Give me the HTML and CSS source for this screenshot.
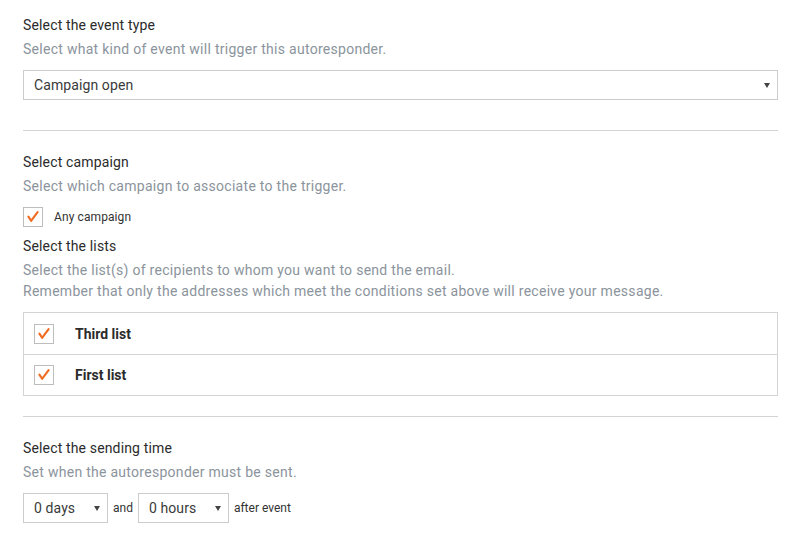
FILE: index.html
```html
<!DOCTYPE html>
<html lang="en">

<head>
  <meta charset="UTF-8" />
  <meta name="viewport" content="width=device-width, initial-scale=1.0" />
  <title>Autoresponder trigger</title>
  <link rel="stylesheet" href="styles.css">
</head>

<body>
  <form class="trigger-form">
    <section class="field">
      <h3 class="field-title">Select the event type</h3>
      <p class="field-help">Select what kind of event will trigger this autoresponder.</p>
      <div class="select-wrap select-wide">
        <select class="select">
          <option>Campaign open</option>
        </select>
      </div>
    </section>

    <hr class="divider divider-first" />

    <section class="field">
      <h3 class="field-title">Select campaign</h3>
      <p class="field-help">Select which campaign to associate to the trigger.</p>
      <label class="check-row">
        <span class="checkbox">
          <svg viewBox="0 0 20 20" width="20" height="20"><path d="M5.4 9.6 L8.1 13.8 L14.6 5.2" /></svg>
        </span>
        <span class="check-label">Any campaign</span>
      </label>

      <h3 class="field-title">Select the lists</h3>
      <p class="field-help">Select the list(s) of recipients to whom you want to send the email.<br>Remember that only the addresses which meet the conditions set above will receive your message.</p>
      <ul class="list-box">
        <li class="list-item">
          <span class="checkbox">
            <svg viewBox="0 0 20 20" width="20" height="20"><path d="M5.4 9.6 L8.1 13.8 L14.6 5.2" /></svg>
          </span>
          <span class="list-name">Third list</span>
        </li>
        <li class="list-item">
          <span class="checkbox">
            <svg viewBox="0 0 20 20" width="20" height="20"><path d="M5.4 9.6 L8.1 13.8 L14.6 5.2" /></svg>
          </span>
          <span class="list-name">First list</span>
        </li>
      </ul>
    </section>

    <hr class="divider" />

    <section class="field">
      <h3 class="field-title">Select the sending time</h3>
      <p class="field-help">Set when the autoresponder must be sent.</p>
      <div class="time-row">
        <div class="select-wrap select-days">
          <select class="select">
            <option>0 days</option>
          </select>
        </div>
        <span class="time-text">and</span>
        <div class="select-wrap select-hours">
          <select class="select">
            <option>0 hours</option>
          </select>
        </div>
        <span class="time-text">after event</span>
      </div>
    </section>
  </form>
</body>

</html>
```

FILE: styles.css
```css
* {
  box-sizing: border-box;
}

body {
  margin: 0;
  background: #ffffff;
  font-family: Roboto, 'Liberation Sans', sans-serif;
  color: #333333;
}

.trigger-form {
  margin: 0 17px 0 23px;
  padding-top: 15px;
}

.field-title {
  margin: 0;
  font-size: 14px;
  font-weight: 400;
  line-height: 21px;
  letter-spacing: 0.15px;
  color: #2b2b2b;
}

.field-help {
  margin: 3px 0 0;
  font-size: 14px;
  line-height: 21px;
  letter-spacing: 0.28px;
  color: #8b949c;
}

.select-wrap {
  position: relative;
  margin-top: 10px;
}

.select-wrap::after {
  content: '';
  position: absolute;
  top: 13px;
  right: 8px;
  border-left: 3.5px solid transparent;
  border-right: 3.5px solid transparent;
  border-top: 5px solid #444444;
  pointer-events: none;
}

.select {
  -webkit-appearance: none;
  appearance: none;
  display: block;
  width: 100%;
  height: 30px;
  margin: 0;
  padding: 0 20px 0 10px;
  border: 1px solid #cccccc;
  border-radius: 0;
  background: #ffffff;
  font-family: inherit;
  font-size: 14px;
  letter-spacing: 0.1px;
  color: #3a3a3a;
  outline: none;
}

.divider {
  margin: 20px 0 0;
  border: none;
  border-top: 1px solid #d4d4d4;
}

.divider + .field {
  padding-top: 21px;
}

.divider-first {
  margin-top: 30px;
}

.check-row {
  display: flex;
  align-items: center;
  gap: 11px;
  margin: 10px 0 9px;
}

.checkbox {
  display: inline-flex;
  width: 20px;
  height: 20px;
  border: 1px solid #bdbdbd;
  background: #ffffff;
  flex-shrink: 0;
}

.checkbox svg {
  margin: -1px;
}

.checkbox path {
  fill: none;
  stroke: #f06b22;
  stroke-width: 2.1;
  stroke-linecap: round;
  stroke-linejoin: round;
}

.check-label {
  font-size: 12px;
  letter-spacing: 0.1px;
  color: #333333;
}

.list-box {
  list-style: none;
  margin: 10px 0 0;
  padding: 0;
  border: 1px solid #d4d4d4;
}

.list-item {
  display: flex;
  align-items: center;
  gap: 21px;
  height: 41px;
  padding: 0 10px;
}

.list-item + .list-item {
  border-top: 1px solid #d4d4d4;
}

.list-name {
  font-size: 14px;
  font-weight: 700;
  color: #2b2b2b;
}

.time-row {
  display: flex;
  align-items: center;
  gap: 5px;
  margin-top: 10px;
}

.time-row .select-wrap {
  margin-top: 0;
}

.select-days {
  width: 85px;
}

.select-hours {
  width: 91px;
}

.time-text {
  font-size: 12px;
  color: #333333;
}
```
